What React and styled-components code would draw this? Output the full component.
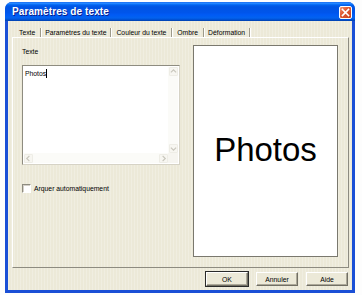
import React from "react";
import styled, { createGlobalStyle } from "styled-components";

const GlobalStyle = createGlobalStyle`
  html, body {
    margin: 0;
    padding: 0;
    background: #fdfdfd;
  }
  body {
    font-family: "Liberation Sans", Arial, sans-serif;
    color: #000;
  }
`;

const Window = styled.div`
  margin: 2px 0 0 5px;
  width: 350px;
  height: 291px;
  box-sizing: border-box;
  display: flex;
  flex-direction: column;
  background: #1a4fd6;
  border-radius: 7px 7px 0 0;
  overflow: hidden;
`;

const TitleBar = styled.div`
  height: 19px;
  flex: none;
  display: flex;
  align-items: center;
  justify-content: space-between;
  padding: 0 3px 0 7px;
  background: linear-gradient(
    180deg,
    #0058ee 0%,
    #3a93ff 5%,
    #127dff 10%,
    #0262ee 16%,
    #0054e3 26%,
    #0055eb 56%,
    #005bf5 68%,
    #0262ef 84%,
    #0052d6 92%,
    #0040ab 100%
  );
`;

const Title = styled.span`
  color: #fff;
  font-size: 10px;
  font-weight: bold;
  letter-spacing: 0.1px;
  text-shadow: 1px 1px 0 #0a1e8c;
`;

const CloseButton = styled.div`
  width: 13px;
  height: 13px;
  margin-top: 2px;
  box-sizing: border-box;
  border: 1px solid #fff;
  border-radius: 2px;
  background: linear-gradient(135deg, #f09a7a 0%, #e2603a 35%, #c8401c 100%);
  display: flex;
  align-items: center;
  justify-content: center;
`;

const Body = styled.div`
  flex: 1;
  margin: 0 3px 3px;
  display: flex;
  flex-direction: column;
  background-color: #ece9d8;
  background-image: repeating-linear-gradient(
    90deg,
    rgba(255, 255, 255, 0.22) 0 1px,
    transparent 1px 3px
  );
`;

const TabStrip = styled.div`
  height: 16px;
  flex: none;
  box-sizing: border-box;
  display: flex;
  align-items: flex-start;
  padding: 7px 0 0 6px;
`;

const Tab = styled.div`
  height: 9px;
  line-height: 9px;
  font-size: 6.8px;
  padding: 0 ${(p) => p.$pad || 4}px;
  border-right: 1px solid #9d9a8a;
  box-shadow: 1px 0 0 #fff;
  white-space: nowrap;
`;

const TabPage = styled.div`
  flex: 1;
  margin: 0 3px 0 4px;
  box-sizing: border-box;
  border-top: 1px solid #fff;
  border-left: 1px solid #fff;
  border-right: 1px solid #8d8b80;
  border-bottom: 1px solid #8d8b80;
  padding: 7px 10px 10px 9px;
  display: grid;
  grid-template-columns: 158px 145px;
  column-gap: 13px;
`;

const LeftColumn = styled.div`
  display: flex;
  flex-direction: column;
`;

const Label = styled.div`
  margin-top: 2px;
  height: 10px;
  line-height: 10px;
  font-size: 6.8px;
  margin-bottom: 8px;
`;

const TextBox = styled.div`
  height: 100px;
  box-sizing: border-box;
  border-top: 1px solid #8e8c80;
  border-left: 1px solid #8e8c80;
  border-right: 1px solid #d6d3c6;
  border-bottom: 1px solid #d6d3c6;
  background: #fff;
  display: grid;
  grid-template-columns: 1fr 10px;
  grid-template-rows: 1fr 10px;
  padding: 1px;
`;

const TextContent = styled.div`
  padding: 2px 1px;
  font-size: 6.8px;
  line-height: 9px;
  display: flex;
  align-items: flex-start;
`;

const Caret = styled.span`
  display: inline-block;
  width: 1px;
  height: 9px;
  background: #000;
`;

const ScrollTrack = styled.div`
  background: #fbfbf8;
  display: flex;
  flex-direction: ${(p) => (p.$horizontal ? "row" : "column")};
  justify-content: space-between;
  align-items: center;
`;

const ScrollArrow = styled.div`
  width: 9px;
  height: 9px;
  box-sizing: border-box;
  border: 1px solid #eeede6;
  border-radius: 1px;
  background: #f7f6f1;
  display: flex;
  align-items: center;
  justify-content: center;
`;

const Corner = styled.div`
  background: #f6f5f0;
`;

const CheckRow = styled.label`
  margin-top: 18px;
  display: flex;
  align-items: center;
  gap: 3px;
  font-size: 6.8px;
  height: 11px;
`;

const CheckBox = styled.span`
  width: 9px;
  height: 9px;
  box-sizing: border-box;
  border-top: 1px solid #8e8c80;
  border-left: 1px solid #8e8c80;
  border-right: 1px solid #fff;
  border-bottom: 1px solid #fff;
  background: #fff;
  box-shadow: inset 1px 1px 0 #d4d0c8;
`;

const Preview = styled.div`
  box-sizing: border-box;
  border: 1px solid #7a786e;
  background: #fff;
  display: flex;
  align-items: center;
  justify-content: center;
  font-size: 33px;
  padding-bottom: 2px;
`;

const Footer = styled.div`
  height: 22px;
  flex: none;
  box-sizing: border-box;
  display: flex;
  justify-content: flex-end;
  align-items: flex-start;
  padding: 4px 4px 0 0;
  gap: 8px;
`;

const Button = styled.div`
  width: 42px;
  height: 14px;
  box-sizing: border-box;
  display: flex;
  align-items: center;
  justify-content: center;
  font-size: 6.8px;
  background: #ece9d8;
  border-top: 1px solid #fff;
  border-left: 1px solid #fff;
  border-right: 1px solid #716f64;
  border-bottom: 1px solid #716f64;
  box-shadow: ${(p) =>
    p.$default ? "0 0 0 1px #2a2a2a, inset -1px -1px 0 #aca899" : "inset -1px -1px 0 #aca899"};
`;

const Arrow = ({ dir }) => {
  const points = {
    up: "1,5 4,2 7,5",
    down: "1,3 4,6 7,3",
    left: "5,1 2,4 5,7",
    right: "3,1 6,4 3,7",
  }[dir];
  return (
    <svg width="7" height="7" viewBox="0 0 8 8">
      <polyline points={points} fill="none" stroke="#c9c7bd" strokeWidth="1.4" />
    </svg>
  );
};

const App = () => {
  return (
    <>
      <GlobalStyle />
      <Window>
        <TitleBar>
          <Title>Paramètres de texte</Title>
          <CloseButton>
            <svg width="9" height="9" viewBox="0 0 9 9">
              <path d="M1.5 1.5 L7.5 7.5 M7.5 1.5 L1.5 7.5" stroke="#fff" strokeWidth="1.6" strokeLinecap="square" />
            </svg>
          </CloseButton>
        </TitleBar>
        <Body>
          <TabStrip>
            <Tab $pad={5}>Texte</Tab>
            <Tab>Paramètres du texte</Tab>
            <Tab $pad={5}>Couleur du texte</Tab>
            <Tab $pad={5}>Ombre</Tab>
            <Tab>Déformation</Tab>
          </TabStrip>
          <TabPage>
            <LeftColumn>
              <Label>Texte</Label>
              <TextBox>
                <TextContent>
                  Photos
                  <Caret />
                </TextContent>
                <ScrollTrack>
                  <ScrollArrow>
                    <Arrow dir="up" />
                  </ScrollArrow>
                  <ScrollArrow>
                    <Arrow dir="down" />
                  </ScrollArrow>
                </ScrollTrack>
                <ScrollTrack $horizontal>
                  <ScrollArrow>
                    <Arrow dir="left" />
                  </ScrollArrow>
                  <ScrollArrow>
                    <Arrow dir="right" />
                  </ScrollArrow>
                </ScrollTrack>
                <Corner />
              </TextBox>
              <CheckRow>
                <CheckBox />
                Arquer automatiquement
              </CheckRow>
            </LeftColumn>
            <Preview>Photos</Preview>
          </TabPage>
          <Footer>
            <Button $default>OK</Button>
            <Button>Annuler</Button>
            <Button>Aide</Button>
          </Footer>
        </Body>
      </Window>
    </>
  );
};

export default App;
